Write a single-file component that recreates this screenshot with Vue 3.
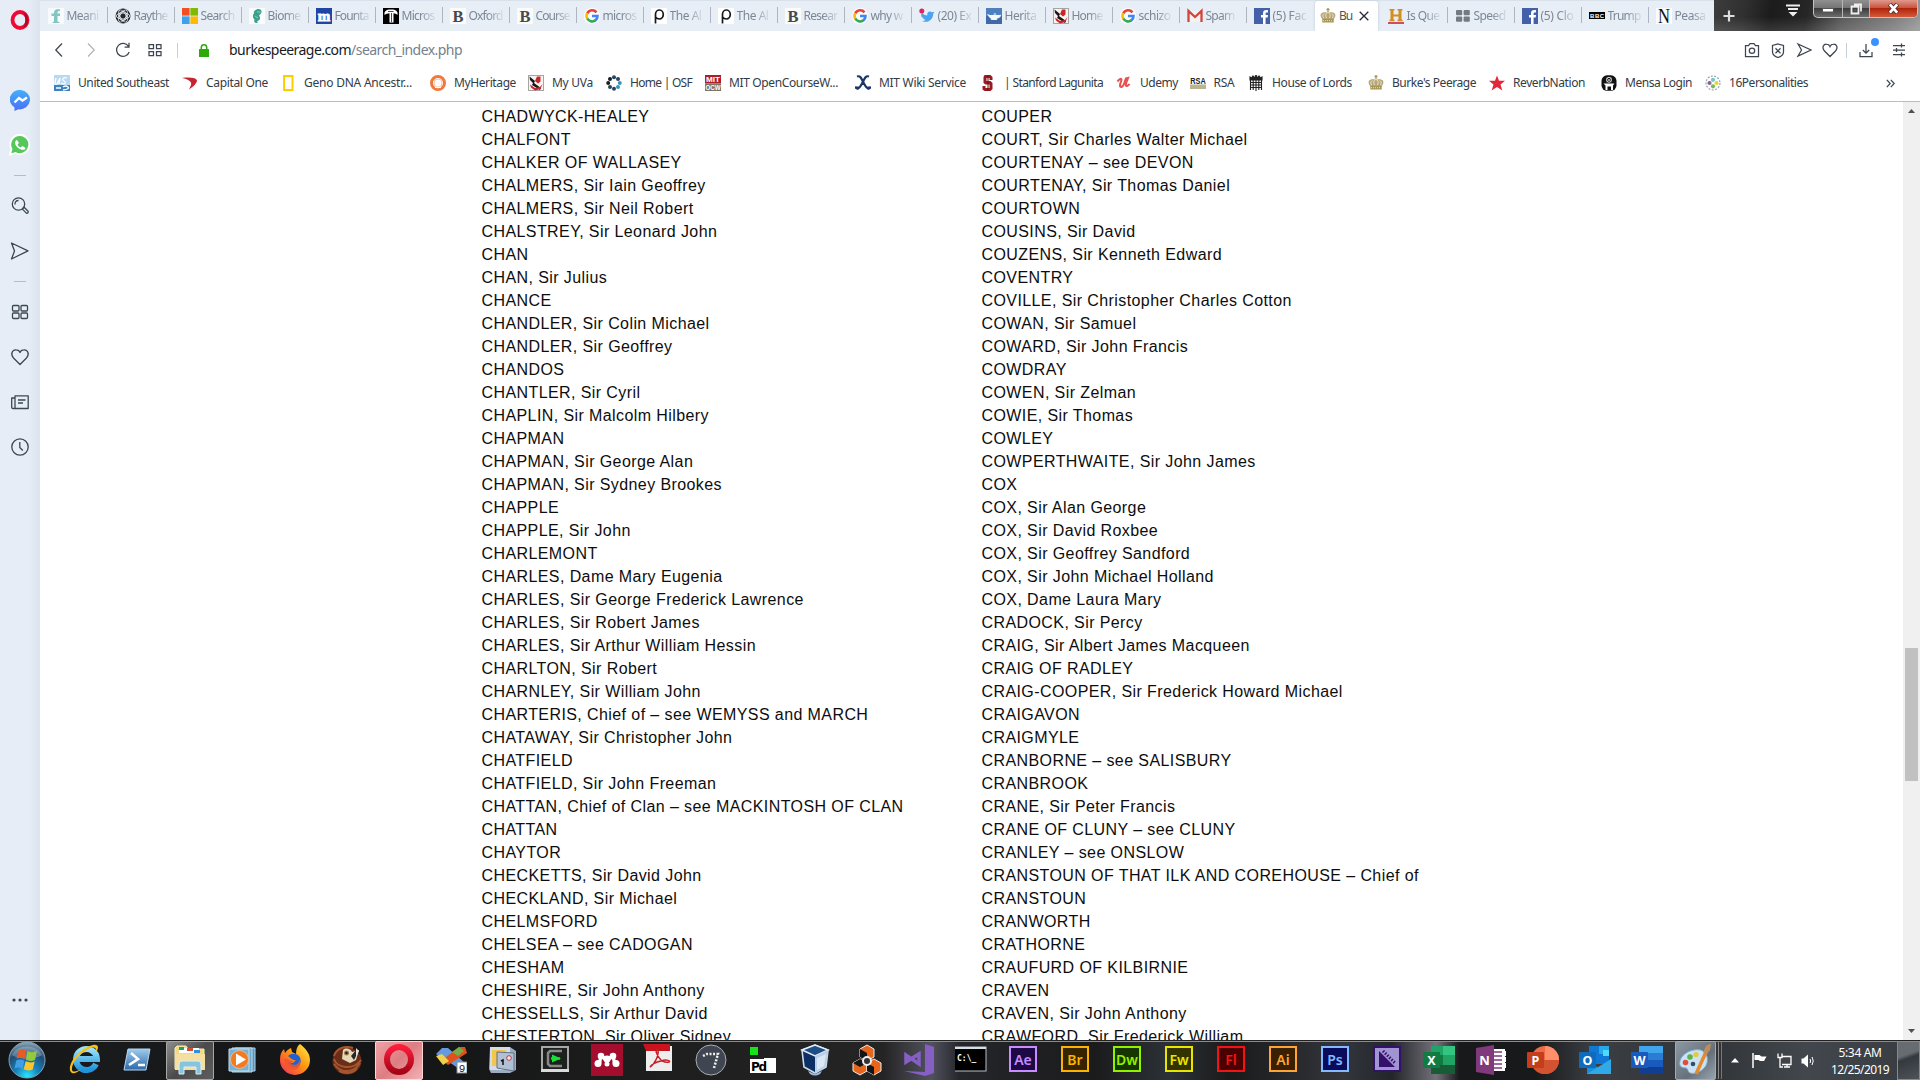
<script setup>
const art = {
  fable: '<rect width="16" height="16" fill="#f7fafa"/><path d="M12 1.500C7 .5 6 3 6 5.500H3.500v2.500H6v5.500l-1.500 1v.5h7v-.7l-2-.8V8h2.500V5.500H9.500c0-2 .3-2.700 2.500-2.300z" fill="#83c5c3"/>',
  atom: '<circle cx="8" cy="8" r="7.500" fill="#24272b"/><g fill="none" stroke="#e8eef5" stroke-width=".9"><ellipse cx="8" cy="8" rx="6.800" ry="3"/><ellipse cx="8" cy="8" rx="6.800" ry="3" transform="rotate(60 8 8)"/><ellipse cx="8" cy="8" rx="6.800" ry="3" transform="rotate(120 8 8)"/><circle cx="8" cy="8" r="4.500"/></g>',
  ms: '<path d="M0 0h7.600v7.600H0z" fill="#f25022"/><path d="M8.400 0H16v7.600H8.400z" fill="#7fba00"/><path d="M0 8.400h7.600V16H0z" fill="#3fa0ee"/><path d="M8.400 8.400H16V16H8.400z" fill="#ffb900"/>',
  horse: '<rect width="16" height="16" fill="#fafcfc"/><path d="M7.500 1.500c3-1.300 5.500.2 5 2.800-.3 1.700-1.500 2-2.500 3.200 1.500 1.500 1.500 4-.5 5-1.500.6-1.500 1.500-.7 2.500-3 .5-4.300-1.500-3.300-3.800C3.500 10 3.500 7 5 5.300 4.500 3.500 5.500 2.300 7.500 1.500z" fill="#3ba08e"/><path d="M8 4h3.500M6 8l3 2" stroke="#8fd0c2"/>',
  fount: '<rect width="16" height="16" fill="#2145a5"/><text x="8" y="12.800" text-anchor="middle" font-family="Liberation Serif,serif" font-weight="900" font-size="15" fill="#fff" stroke="#fff" stroke-width=".9">m</text>',
  tt: '<rect width="16" height="16" fill="#000"/><path d="M1.500 4.500C2.500 2 5 1.500 8 1.500s5.500.5 6.500 3V7c-1.200-1-2.500-1.800-4-1.800V14.500h-4V5.200C4.500 5.200 3 6 1.500 7z" fill="#fff"/><path d="M5 3.500h5.500M8.500 5v9" stroke="#000" stroke-width=".7"/>',
  bold: '<rect width="16" height="16" fill="#fbfbfa"/><text x="8" y="13.800" text-anchor="middle" font-family="Liberation Serif,serif" font-weight="700" font-size="16.500" fill="#454a50">B</text>',
  google: '<rect width="16" height="16" rx="7" fill="#f8fafc"/><g fill="none" stroke-width="2.600"><path d="M12.500 4.300A5.500 5.500 0 0 0 3.300 5.400" stroke="#ea4335"/><path d="M3.300 5.200a5.500 5.500 0 0 0 0 5.500" stroke="#fbbc05"/><path d="M3.300 10.500a5.500 5.500 0 0 0 8.500 1.600" stroke="#34a853"/><path d="M11.500 12.300A5.500 5.500 0 0 0 13.500 8H8" stroke="#4285f4"/></g>',
  rho: '<rect width="16" height="16" fill="#fff"/><path d="M4.500 15.500V6a3.900 4.500 0 1 1 3.900 5c-2 0-3-.8-3.900-2" fill="none" stroke="#16191d" stroke-width="1.700"/>',
  twitter: '<path d="M3.200 5c2 1.800 3.500 2.500 5 2.500C7.700 3.700 11 2.500 13 4.300l2.400-.6-1.200 2c0 6-5.700 10-11 7.300 1.500 0 2.500-.4 3.500-1.200-1.600-.2-2.400-1-2.800-2.100C2 9 2 7.500 2.300 6z" fill="#4aa4f1"/><circle cx="2.800" cy="3" r="2.500" fill="#e0245e"/>',
  lamp: '<rect width="16" height="16" fill="#4f7fbe"/><rect y="8" width="16" height="8" fill="#3f69a8"/><path d="M1 6l3 1h8c2 0 3-1 3 .8 0 1.200-2 2.200-4.500 3.200l1 1h-7l1-1C4 10.500 2 8 1 6zM7 6.500h3.500L9 5z" fill="#f4f8fb"/>',
  uva: '<rect x=".5" y=".5" width="15" height="15" fill="#f6f3f0" stroke="#a5a5a5"/><path d="M1.500 1.500L7 6l-1 2 7 5-1 2-8-5 1-2-3-3z" fill="#161616"/><path d="M9 1.500h3.500v5L10 8.500 7 6zM2 9.500l5 3.500 5-1 2.500-3-2 5-5.500 1.500-4-3z" fill="#c9252c"/>',
  gmail: '<rect x="1" y="3" width="14" height="11" fill="#f5f3f2"/><path d="M1.500 14V3L8 9l6.500-6v11" fill="none" stroke="#d3453b" stroke-width="2.300"/>',
  fb: '<rect width="16" height="16" fill="#4460a8"/><path d="M9 16V9.500H7V7h2V5.200C9 3 10.300 2 12.200 2H14v2.500h-1.200c-1 0-1.200.4-1.200 1.200V7H14l-.3 2.500h-2.100V16z" fill="#fff"/>',
  crown: '<path d="M2.500 11.500C0 8-.2 5.500 3 4.500c2-.5 3 .2 5-.2 2 .4 3-.3 5 .2 3.200 1 3 3.500.5 7z" fill="#b5a674"/><path d="M3.500 10C2 7 3 6 4.500 5.800M6.500 10C5 7 6 5 8 4.500c2 .5 3 2.500 1.500 5.500M12.500 10c1.500-3 .5-4-1-4.200" fill="none" stroke="#eeeade" stroke-width=".9"/><path d="M8 0v4M6.500 1.500h3" stroke="#a79556" stroke-width="1.300"/><rect x="2.300" y="11" width="11.400" height="3.500" fill="#a79556"/><path d="M3 12.700h10" stroke="#e8e0c0" stroke-dasharray="1 1"/>',
  hist: '<path d="M1.500 1h5v1.600H5.500v4h5v-4H9.500V1h5v1.600h-1v9h1v1.600h-5v-1.600h1V8.400h-5v3.200h1v1.600h-5v-1.600h1v-9h-1z" fill="#d38e1e"/><path d="M0 15h16" stroke="#c3192d" stroke-width="1.500"/>',
  speed: '<g fill="#737b82"><rect x="1" y="2" width="6.200" height="5.200" rx="1"/><rect x="8.600" y="2" width="6.200" height="5.200" rx="1"/><rect x="1" y="8.500" width="6.200" height="5.200" rx="1"/><rect x="8.600" y="8.500" width="6.200" height="5.200" rx="1"/></g>',
  bbc: '<rect y="4" width="16" height="7" fill="#000"/><g font-family="Liberation Sans,sans-serif" font-size="6" font-weight="700" fill="#fff"><text x="1" y="9.700">B</text><text x="6" y="9.700">B</text><text x="10.800" y="9.700">C</text></g>',
  ny: '<rect width="16" height="16" fill="#fbfbfa"/><text x="8" y="14.500" text-anchor="middle" font-family="Liberation Serif,serif" font-size="20" fill="#111" textLength="12" lengthAdjust="spacingAndGlyphs">N</text>',
  us: '<rect width="16" height="16" fill="#b8d9f2"/><rect y="10" width="16" height="6" fill="#3d83c2"/><path d="M2 3L1 8q0 2 2 1l3-6-1 6M13 3c-3-1-6 1-3 3s0 4-3 2M2 13h5M9 12q3-2 5 0t-5 3" stroke="#fff" fill="none" stroke-width="1.300"/>',
  cap: '<path d="M0 3c7-1 13-.5 14.800 2 1 2-3 6.500-7.800 9.500L9 10C10 7 7 4.500 0 3z" fill="#c8242f"/>',
  geno: '<rect x="4.100" y="1" width="8.400" height="14" fill="none" stroke="#fc0" stroke-width="2"/>',
  mh: '<circle cx="8" cy="8" r="6.500" fill="none" stroke="#f0793b" stroke-width="3"/><circle cx="8" cy="8" r="4" fill="none" stroke="#f9c5a6"/><path d="M5 12.500h6" stroke="#fff" stroke-width="1.500"/><path d="M5 14h2M9 14h2" stroke="#f0793b" stroke-width="2"/>',
  osf: '<g fill="#27465e"><circle cx="8" cy="2.200" r="2"/><circle cx="12" cy="3.900" r="2"/><circle cx="8" cy="13.800" r="2"/><circle cx="4" cy="12.100" r="2"/></g><g fill="#3b93bf"><circle cx="13.800" cy="8" r="2"/><circle cx="12" cy="12.100" r="2"/></g><g fill="#151e28"><circle cx="4" cy="3.900" r="2"/><circle cx="2.200" cy="8" r="2"/></g>',
  mit: '<rect width="16" height="8.500" fill="#ad1e2d"/><rect y="8.500" width="16" height="7.500" fill="#7d7468"/><g font-family="Liberation Sans,sans-serif" font-size="8" font-weight="900" fill="#fff"><text x="1" y="7.300" textLength="14" lengthAdjust="spacingAndGlyphs">MIT</text><text x=".5" y="15.200" textLength="15" lengthAdjust="spacingAndGlyphs">OCW</text></g>',
  wiki: '<path d="M2 1.500c3-1 4 1 6 5s3 7 6.500 7.500M14 1.500c-3-1-4 1-6 5s-3 7-6.500 7.500" fill="none" stroke="#1b3668" stroke-width="2.200"/><path d="M0 12.500l4 .5M12 13l4-.5" stroke="#1b3668" stroke-width="2.300"/>',
  stan: '<path d="M4.500 0h6l2 2v3h-3V3h-3v3h4l2 2v6l-2 2h-6l-2-1.500V11h3v2h4V9.500h-4l-2-1.500V2z" fill="#9a1a22"/><path d="M8 0v16" stroke="#6e1116" stroke-width="1"/>',
  udemy: '<path d="M1.500 6.500c3-4 4.800-3.500 3.500 0-1.300 3.500-1.500 6 .5 5.500 2.500-1 3-5 4.500-8.500l2-.5c-2 4.500-3 8.500-1 8 1-.3 1.800-1 2.500-2" fill="none" stroke="#ea5252" stroke-width="2.100"/>',
  rsa: '<rect y="9.500" width="16" height="4.500" fill="#bab590"/><text x=".3" y="9" font-family="Liberation Sans,sans-serif" font-size="9" font-weight="700" textLength="15.500" lengthAdjust="spacingAndGlyphs" fill="#222">RSA</text>',
  lords: '<path d="M2 5V2l1.500 1L5 1l1.500 2L8 0l1.500 3L11 1l1.500 2L14 2v3zM2.500 5v10M5.200 5v10M8 5v11M10.800 5v10M13.500 5v10M2 7.500h12M2 10h12M2 12.500h12" stroke="#222" stroke-width="1.100" fill="#222"/>',
  star: '<path d="M8 .5l2 5.300h6l-4.500 3.800L13.300 15.500 8 12l-5.300 3.500L4.500 9.600 0 5.800h6z" fill="#df2939"/>',
  mensa: '<rect x=".5" y=".3" width="15" height="15.500" rx="5.500" fill="#111"/><circle cx="8" cy="4.800" r="2.500" fill="none" stroke="#ddd"/><path d="M5.500 3l5 4M10.500 3l-5 4" stroke="#ddd" stroke-width=".7"/><path d="M2.500 8.500h11L12 10.500V15h-2v-3.500H6.500V15h-2v-4.500z" fill="#fff"/>',
  six: '<circle cx="8" cy="8" r="7" fill="none" stroke="#91aab1" stroke-width="1.200" stroke-dasharray="2 1.400"/><circle cx="8" cy="4.800" r="2.100" fill="#7fc3c9"/><circle cx="11.500" cy="8" r="2.100" fill="#e7d63d"/><circle cx="8" cy="11.300" r="2.100" fill="#7cb857"/><circle cx="4.500" cy="8" r="2.100" fill="#86668e"/>'
}
const tabs = [
  ['fable', 'Meani', 32], ['atom', 'Raythe', 34], ['ms', 'Search', 34], ['horse', 'Biome', 33], ['fount', 'Founta', 34], ['tt', 'Micros', 33],
  ['bold', 'Oxford', 34], ['bold', 'Course', 34], ['google', 'micros', 34], ['rho', 'The Al', 32], ['rho', 'The Al', 32], ['bold', 'Resear', 34],
  ['google', 'why w', 32], ['twitter', '(20) Ex', 34], ['lamp', 'Herita', 32], ['uva', 'Home', 31], ['google', 'schizo', 32], ['gmail', 'Spam', 29],
  ['fb', '(5) Fac', 34], ['crown', 'Bu', 13], ['hist', 'Is Que', 33], ['speed', 'Speed', 32], ['fb', '(5) Clo', 33], ['bbc', 'Trump', 33], ['ny', 'Peasa', 31]
]
const marks = [
  ['us', 'United Southeast', 54, 91], ['cap', 'Capital One', 182, 62], ['geno', 'Geno DNA Ancestr...', 280, 108], ['mh', 'MyHeritage', 430, 62],
  ['uva', 'My UVa', 528, 41], ['osf', 'Home | OSF', 606, 62], ['mit', 'MIT OpenCourseW...', 705, 109], ['wiki', 'MIT Wiki Service', 855, 87],
  ['stan', '| Stanford Lagunita', 980, 99], ['udemy', 'Udemy', 1116, 38], ['rsa', 'RSA', 1189.5, 21], ['lords', 'House of Lords', 1248, 80],
  ['crown', "Burke's Peerage", 1368, 84], ['star', 'ReverbNation', 1489, 72], ['mensa', 'Mensa Login', 1601, 67], ['six', '16Personalities', 1705, 79]
].map((m, i, all) => ({ icon: m[0], label: m[1], text: m[3], cell: (all[i + 1] ? all[i + 1][2] : 1830) - m[2] }))

// Tightens or loosens tracking so a label takes its allotted width.
const fit = (el, { value }) => {
  el.style.letterSpacing = '0px'
  el.style.letterSpacing = (value - el.getBoundingClientRect().width) / el.textContent.length + 'px'
}
const vFit = { mounted: fit }

const left = `CHADWYCK-HEALEY
CHALFONT
CHALKER OF WALLASEY
CHALMERS, Sir Iain Geoffrey
CHALMERS, Sir Neil Robert
CHALSTREY, Sir Leonard John
CHAN
CHAN, Sir Julius
CHANCE
CHANDLER, Sir Colin Michael
CHANDLER, Sir Geoffrey
CHANDOS
CHANTLER, Sir Cyril
CHAPLIN, Sir Malcolm Hilbery
CHAPMAN
CHAPMAN, Sir George Alan
CHAPMAN, Sir Sydney Brookes
CHAPPLE
CHAPPLE, Sir John
CHARLEMONT
CHARLES, Dame Mary Eugenia
CHARLES, Sir George Frederick Lawrence
CHARLES, Sir Robert James
CHARLES, Sir Arthur William Hessin
CHARLTON, Sir Robert
CHARNLEY, Sir William John
CHARTERIS, Chief of – see WEMYSS and MARCH
CHATAWAY, Sir Christopher John
CHATFIELD
CHATFIELD, Sir John Freeman
CHATTAN, Chief of Clan – see MACKINTOSH OF CLAN
CHATTAN
CHAYTOR
CHECKETTS, Sir David John
CHECKLAND, Sir Michael
CHELMSFORD
CHELSEA – see CADOGAN
CHESHAM
CHESHIRE, Sir John Anthony
CHESSELLS, Sir Arthur David
CHESTERTON, Sir Oliver Sidney`.split('\n')
const right = `COUPER
COURT, Sir Charles Walter Michael
COURTENAY – see DEVON
COURTENAY, Sir Thomas Daniel
COURTOWN
COUSINS, Sir David
COUZENS, Sir Kenneth Edward
COVENTRY
COVILLE, Sir Christopher Charles Cotton
COWAN, Sir Samuel
COWARD, Sir John Francis
COWDRAY
COWEN, Sir Zelman
COWIE, Sir Thomas
COWLEY
COWPERTHWAITE, Sir John James
COX
COX, Sir Alan George
COX, Sir David Roxbee
COX, Sir Geoffrey Sandford
COX, Sir John Michael Holland
COX, Dame Laura Mary
CRADOCK, Sir Percy
CRAIG, Sir Albert James Macqueen
CRAIG OF RADLEY
CRAIG-COOPER, Sir Frederick Howard Michael
CRAIGAVON
CRAIGMYLE
CRANBORNE – see SALISBURY
CRANBROOK
CRANE, Sir Peter Francis
CRANE OF CLUNY – see CLUNY
CRANLEY – see ONSLOW
CRANSTOUN OF THAT ILK AND COREHOUSE – Chief of
CRANSTOUN
CRANWORTH
CRATHORNE
CRAUFURD OF KILBIRNIE
CRAVEN
CRAVEN, Sir John Anthony
CRAWFORD, Sir Frederick William`.split('\n')

const F = 'font-family="Noto Sans,sans-serif"'
const adobe = (t, c, bg) =>
  `<rect x="3" y="3" width="26" height="24" fill="${bg}" stroke="${c}" stroke-width="2"/><text x="16" y="20.500" text-anchor="middle" ${F} font-weight="600" font-size="14" fill="${c}">${t}</text>`
const office = (t, c) =>
  `<rect x="0" y="8" width="17" height="16" rx="1" fill="${c}"/><text x="8.500" y="20.500" text-anchor="middle" ${F} font-weight="700" font-size="12.500" fill="#fff">${t}</text>`
const cube = (x, y, top) =>
  `<path d="M${x} ${y}l7-4 7 4v8l-7 4-7-4z" fill="#e8651c" stroke="#eee"/><path d="${top ? `M${x} ${y}l7-4 7 4-7 4z` : `M${x} ${y}l7 4v8l-7-4z`}" fill="#151515"/>`
const apps = [
  { wide: true, art: '<defs><linearGradient id="ie" x2="0" y2="1"><stop stop-color="#9be2fa"/><stop offset="1" stop-color="#1d94dc"/></linearGradient></defs><path d="M28 20A10.500 10.500 0 1 1 29 15H11" fill="none" stroke="url(#ie)" stroke-width="6"/><path d="M4 29C-3 25 8 5 25 1c6-1 6 3 3 7 1-4-2-6-7-3C11 9 3 20 4 26c1 3 6 1 9-1-4 4-7 5-9 4z" fill="#f5bf1e"/>' },
  { wide: true, art: '<defs><linearGradient id="psh" x2="0" y2="1"><stop stop-color="#9fcbed"/><stop offset="1" stop-color="#2a69ab"/></linearGradient></defs><path d="M7 5h22l-4 21H3z" fill="url(#psh)" stroke="#b5d8f3"/><path d="M10 9l7 6-9 6M17 21h7" fill="none" stroke="#fff" stroke-width="2.600"/>' },
  { on: true, art: '<path d="M1 4l2-2h9l2 3h16v20H1z" fill="#f0d984" stroke="#f9edb5"/><path d="M5 4h20v5H5z" fill="#fff"/><path d="M5 3h5v3H5z" fill="#1ba94c"/><path d="M13 4h6v3h-6z" fill="#d54d2e"/><path d="M20 6h6v3h-6z" fill="#2d93d8"/><path d="M1 10h30v16H1z" fill="#f4dfa0"/><path d="M5 30V20q0-3 3-3h16q3 0 3 3v10h-5v-7H10v7z" fill="#89c4dd" stroke="#d7f0f7"/>' },
  { wide: true, art: '<path d="M9 4h20v23H9z" fill="#5794bd" stroke="#b5d6e9"/><path d="M6 4h20v24H6z" fill="#70a8cc" stroke="#c0deee"/><path d="M3 5h20v22H3z" fill="#77b1d3" stroke="#c3e1f0"/><circle cx="13.500" cy="15.500" r="9" fill="#f47a20" stroke="#ffd1a5" stroke-width=".6"/><path d="M10 9.500l10 6-10 6z" fill="#fff"/>' },
  { art: '<defs><linearGradient id="ff" x1="1" x2="0" y2="1"><stop stop-color="#fff04e"/><stop offset=".45" stop-color="#ff980e"/><stop offset="1" stop-color="#f1265c"/></linearGradient></defs><path d="M21 0c5 4 10 9 10 16a15 15 0 0 1-30 0C1 11 2 8 5 5l1 4c2-3 4-4 6-5l1 4 4 2c0-4 1-8 4-10z" fill="url(#ff)"/><path d="M9 12c3-3 8-3 11 0 3 4 2 9-2 11-4 1-8-1-9-5l5 1 3-3c-3 1-5-2-8-4z" fill="#2460cd"/><path d="M5 15c4-1 5 2 9 2l-2 3c4 2 9 0 8-5 3 6-1 12-7 11-5-1-8-6-8-11z" fill="#f0562a" opacity=".85"/>' },
  { art: '<ellipse cx="16" cy="17" rx="14.500" ry="13.500" fill="#6a2d18"/><path d="M3 15c3 9 19 12 27 1M3 20c7 10 20 9 26-1M8 27c6 3 14 3 18-3M3 12C5 5 13 1 22 4" stroke="#a5562f" stroke-width="2" fill="none"/><path d="M12 6c3-3 8-1 9 2l7-2-3 10-6 3-8-4z" fill="#e8d8b8"/><circle cx="15.500" cy="9" r="2.500" fill="#9b7b4f"/><circle cx="15.500" cy="9" r="1.200" fill="#231a14"/><path d="M20 12l5-6 2 2-4 8z" fill="#23272b"/><path d="M25 4l3 3-3 6" fill="#e3e3e3"/>' },
  { on: true, red: true, art: '<defs><linearGradient id="op" x2="0" y2="1"><stop stop-color="#fb1d3a"/><stop offset="1" stop-color="#a70317"/></linearGradient></defs><ellipse cx="16" cy="15.500" rx="12" ry="12.500" fill="none" stroke="url(#op)" stroke-width="6"/>' },
  { art: '<path d="M1 10l6-6h6l17 15-6 6-7-5z" fill="#649be0"/><path d="M24 3h6l2 6-19 12-6-5z" fill="#e0521d"/><path d="M1 12l7 9 6-4-7-7z" fill="#f2d14a"/><path d="M17 8l7-5 5 4-6 5z" fill="#73ad47"/><rect x="22" y="18" width="10" height="11" fill="#fff" stroke="#888"/><text x="27" y="27.500" text-anchor="middle" font-family="Liberation Mono,monospace" font-size="11" fill="#222">9</text>' },
  { art: '<path d="M3 3h20l6 4v19l-6 3H4L2 25z" fill="#9eacc1"/><path d="M3 3h20v23H3z" fill="#d4dcea"/><path d="M5 6h14v16H5z" fill="#f3c64e"/><path d="M10 8l17 1v18l-17-3z" fill="#b2c0d4" stroke="#607089"/><circle cx="22" cy="14" r="2.300" fill="#eee" stroke="#bf3747"/><path d="M14 17l2-1v5" stroke="#111" stroke-width="1.500" fill="none"/>' },
  { art: '<path d="M3 3h26v24H3z" fill="#1d201e" stroke="#a7a9a9" stroke-width="2"/><path d="M2 25h28v3H2z" fill="#d8dbd9"/><path d="M23 7H11L9 9v11l2 2h12M12 14.500h9" fill="none" stroke="#888" stroke-width="2.500"/><path d="M13 10.500l9 4-9 4z" fill="#16df37"/>' },
  { art: '<rect width="32" height="32" fill="#a40d2e"/><g fill="#fff"><circle cx="10" cy="12" r="3.300"/><circle cx="22" cy="12" r="3.300"/><circle cx="16" cy="15" r="3.600"/><circle cx="7" cy="19.500" r="3.500"/><circle cx="25" cy="19.500" r="3.500"/><circle cx="16" cy="20" r="2.500"/><path d="M8 12l-1 8h3l1-5 5 3 5-3 1 5h3l-1-8z"/></g>' },
  { art: '<path d="M3 2h26v25H3z" fill="#f3f2f1"/><path d="M0 0h27v7H3z" fill="#c9141d"/><path d="M3 7h26v20H3z" fill="#eee"/><path d="M7 23c5-3 9-12 8-17-1-2-3 0-1 4 3 7 8 9 12 8 2-1-2-3-8-1-5 1-9 3-11 6z" fill="none" stroke="#cb1d25" stroke-width="1.500"/>' },
  { art: '<circle cx="16" cy="16" r="15" fill="#3f4652" stroke="#a9adb3"/><path d="M8 12l4-2h11l-4 14" fill="none" stroke="#eee" stroke-width="2.500" stroke-dasharray="2 1.500"/>' },
  { art: '<path d="M3 3h8v8H3z" fill="#14e517"/><path d="M3 15h14v-1h12v15H3z" fill="#fff"/><text x="4" y="26.500" font-family="DejaVu Sans,sans-serif" font-weight="700" font-size="12" textLength="16">Pd</text>' },
  { art: '<path d="M3 6l13-5 13 5-2 17-11 6-11-6z" fill="#0e2f63" stroke="#cbdcec" stroke-width="1.600"/><path d="M3 6l13-5 13 5-13 6z" fill="#1f4d86" stroke="#e2edf6" stroke-width="1.500"/><path d="M16 12l13-6-2 17-11 6z" fill="#b9d0e8"/><path d="M18 14l9-4-2 12-7 4z" fill="#dbe8f3"/><path d="M9 27l7 3 7-3-2 3q-5 3-10 0z" fill="#9fbbe0"/>' },
  { art: cube(9, 5, false) + cube(2, 19, true) + cube(16, 19, false) + '<circle cx="16" cy="17" r="4" fill="#333" stroke="#eee" stroke-width="2"/>' },
  { art: '<path d="M22 0l9 3v26l-9 3-21-5 21 1z" fill="#865fc5"/><path d="M3 11v7l13-8v10z" fill="none" stroke="#865fc5" stroke-width="3.500"/>' },
  { art: '<rect x="-1" y="3" width="32" height="24" fill="#000" stroke="#b9bec3"/><path d="M-1 4h32" stroke="#d4dfe8" stroke-width="2"/><text x="2" y="16.500" font-family="DejaVu Sans Mono,monospace" font-size="8" font-weight="700" fill="#fff">C:\\_</text>' },
  { art: adobe('Ae', '#c78cff', '#1d0a45') }, { art: adobe('Br', '#f7b500', '#372300') }, { art: adobe('Dw', '#91f200', '#173500') },
  { art: adobe('Fw', '#e8e500', '#333300') }, { art: adobe('Fl', '#f11414', '#4b0000') }, { art: adobe('Ai', '#ffa336', '#382000') }, { art: adobe('Ps', '#81baff', '#0b0b5b') },
  { art: '<rect x="3" y="3" width="26" height="24" fill="#a194d2" stroke="#35106b" stroke-width="2"/><path d="M8 7v16h16z" fill="#35106b"/><path d="M12 7l12 12" stroke="#35106b" stroke-width="3" stroke-dasharray="1.500 1.500"/>' },
  { art: '<path d="M8 2h24v28H8z" fill="#21a366"/><path d="M20 2h12v9H20z" fill="#33c481"/><path d="M8 11h12v10H8z" fill="#107c41"/><path d="M8 21h24v9H8z" fill="#185c37"/>' + office('X', '#107c41') },
  { art: '<path d="M18 5h12v22H18z" fill="#fff"/><path d="M19 8h8M19 12h8M19 16h8M19 20h8M19 24h8" stroke="#80397b" stroke-width="1.500"/><path d="M28 7h3v5h-3zM28 13h3v5h-3zM28 19h3v5h-3z" fill="#fff"/><path d="M1 4l18-3v30L1 28z" fill="#80397b"/><text x="9.500" y="20.500" text-anchor="middle" ' + F + ' font-weight="700" font-size="13" fill="#fff">N</text>' },
  { art: '<circle cx="18" cy="16" r="14" fill="#ed6c47"/><path d="M18 2a14 14 0 0 1 14 14H18z" fill="#ff8f6b"/><path d="M4 16h28a14 14 0 0 1-28 0z" fill="#d35230"/>' + office('P', '#c43e1c') },
  { art: '<path d="M10 2h20v18H10z" fill="#0f78d4"/><path d="M20 2h10v8H20z" fill="#28a8ea"/><path d="M24 6h6v6h-6z" fill="#50d9ff"/><path d="M8 30V17l12 7 12-9v15z" fill="#1490df"/><path d="M8 30l24-15v15z" fill="#32a9e7"/>' + office('O', '#0f6cbd') },
  { art: '<path d="M8 2h24v7H8z" fill="#41a5ee"/><path d="M8 9h24v7H8z" fill="#2b7cd3"/><path d="M8 16h24v7H8z" fill="#185abd"/><path d="M8 23h24v7H8z" fill="#103f91"/>' + office('W', '#185abd') },
  { on: true, last: true, art: '<path d="M15 6c9-2 15 4 13 13-2 7-11 12-17 10-3-1-1-4-4-5-6 0-7-3-6-7C2 12 8 7 15 6z" fill="#c9e2f4" stroke="#7eabcb"/><circle cx="6.500" cy="18.500" r="2.800" fill="#e04c3f"/><circle cx="11" cy="13" r="2.800" fill="#59b34a"/><circle cx="17" cy="10.500" r="2.600" fill="#eac73d"/><circle cx="14" cy="20" r="2.300" fill="#314f67"/><path d="M27 8L17 30" stroke="#e58a2d" stroke-width="3.500"/><path d="M24 8l3-6 5-3-1 7-4 5z" fill="#be8d5a"/>' }
]
</script>

<template>
  <div class="screen">
    <div class="browser">
      <aside class="side">
        <svg class="opera" width="20" height="20" viewBox="0 0 20 20"><ellipse cx="10" cy="10" rx="7.500" ry="8" fill="none" stroke="#ef0a34" stroke-width="3.800" /><path d="M13 2c7 2 7 14 0 16 3-4 3-12 0-16z" fill="#a80c28" /></svg>
        <svg class="msgr" width="22" height="22" viewBox="0 0 22 22"><defs><linearGradient id="mg" x2="0" y2="1"><stop stop-color="#42b0fb" /><stop offset="1" stop-color="#4d6cf4" /></linearGradient></defs><path d="M11 1a10 9.500 0 1 1-2.500 19.300L4.500 22v-3.500A10 9.500 0 0 1 11 1z" fill="url(#mg)" /><path d="M4.500 13.500l4.500-4.500 3.500 2.500 4.500-3" fill="none" stroke="#fff" stroke-width="2.300" /></svg>
        <svg class="wa" width="22" height="22" viewBox="0 0 22 22"><path d="M11 1a9.500 9.500 0 1 1-4.500 18L1 20.500 2.500 15A9.500 9.500 0 0 1 11 1z" fill="#55c75b" stroke="#fff" stroke-width="1.800" /><path d="M8 6l2 3-1.500 1.500c.7 1.500 1.700 2.500 3 3L13.500 12l3 2c-.5 4-9.500 1-10.500-5 0-1.500 1-3 2-3z" fill="#fff" /></svg>
        <i class="bar"></i>
        <svg class="ic find" width="20" height="20" viewBox="0 0 20 20"><circle cx="8.500" cy="8" r="6.200" /><path d="M12.800 12.500l1.300-1.300 4 4q.6 1.700-1.500 2.200l-4-4zM8.500 4.500C6 4.500 4.800 6 5 8.500" /></svg>
        <svg class="ic plane" width="20" height="20" viewBox="0 0 20 20"><path d="M1.500 2l16.500 7.800L1.500 18l3-8z" /></svg>
        <i class="bar second"></i>
        <svg class="ic grid" width="20" height="20" viewBox="0 0 20 20"><rect x="2.500" y="3.500" width="6.500" height="5.500" rx="1" /><rect x="11" y="3.500" width="6.500" height="5.500" rx="1" /><rect x="2.500" y="11" width="6.500" height="5.500" rx="1" /><rect x="11" y="11" width="6.500" height="5.500" rx="1" /></svg>
        <svg class="ic lower" width="20" height="20" viewBox="0 0 20 20"><path d="M10 17.500L3.500 11C0 7 2.500 2.500 6 2.800c2 0 3.500 1.200 4 2.700.5-1.500 2-2.700 4-2.700 3.500-.3 6 4.200 2.500 8.200z" /></svg>
        <svg class="ic lower" width="20" height="20" viewBox="0 0 20 20"><path d="M5 16.500V3.800h13.200v12.700H3Q1.700 16.500 1.700 15V6H5M8 8h7.500M8 11h5" /></svg>
        <svg class="ic lower" width="20" height="20" viewBox="0 0 20 20"><circle cx="10" cy="10" r="8.200" /><path d="M9.800 5v5.500l3 3" /></svg>
        <svg class="dots" width="16" height="4" viewBox="0 0 16 4"><circle cx="2" cy="2" r="1.600" /><circle cx="8" cy="2" r="1.600" /><circle cx="14" cy="2" r="1.600" /></svg>
      </aside>
      <div class="main">
        <div class="strip">
          <div class="tabs">
            <div v-for="(t, i) in tabs" :key="i" class="tab" :class="{ active: i === 19, plain: i === 18 || i === 19 || i === 24 }">
              <svg width="16" height="16" viewBox="0 0 16 16" v-html="art[t[0]]"></svg>
              <span v-fit="t[2]" class="name">{{ t[1] }}</span>
              <svg v-if="i === 19" class="x" width="10" height="10" viewBox="0 0 10 10"><path d="M.7.7l8.600 8.600M9.300.7L.7 9.300" stroke="#222a33" stroke-width="1.300" /></svg>
            </div>
          </div>
          <div class="glass">
            <svg class="plus" width="12" height="12" viewBox="0 0 12 12"><path d="M6 .5v11M.5 6h11" stroke="#ddd" stroke-width="2.200" /></svg>
            <svg class="stack" width="14" height="13" viewBox="0 0 14 13"><path d="M0 1.500h14M2 5h10" stroke="#eee" stroke-width="2" /><path d="M2.500 8h9L7 12.500z" fill="#eee" /></svg>
            <div class="win">
              <span class="wb"><svg width="12" height="5" viewBox="0 0 12 5"><rect x=".5" y=".5" width="11" height="3.500" fill="#fff" stroke="#555" /></svg></span>
              <span class="wb mid"><svg width="12" height="12" viewBox="0 0 12 12"><path d="M4 1.500h7v7M1.500 3.500h7v7h-7z" fill="none" stroke="#eee" stroke-width="1.800" /><path d="M4 6h2v2H4z" fill="#555" /></svg></span>
              <span class="wb close"><svg width="13" height="11" viewBox="0 0 13 11"><path d="M2.500 1l8 9M10.500 1l-8 9" stroke="#5e3030" stroke-width="4.500" /><path d="M2.800 1.300l7.400 8.400M10.200 1.300L2.800 9.700" stroke="#fff" stroke-width="2.700" /></svg></span>
            </div>
          </div>
        </div>
        <div class="address">
          <svg class="ln back" width="10" height="16" viewBox="0 0 10 16"><path d="M8 1.500L1.800 8 8 14.500" /></svg>
          <svg class="ln fwd" width="10" height="16" viewBox="0 0 10 16"><path d="M2 1.500L8.200 8 2 14.500" /></svg>
          <svg class="ln" width="16" height="16" viewBox="0 0 16 16"><path d="M13.500 4.300A6.500 6.500 0 1 0 14.200 10M14 .8v4.400H9.600" /></svg>
          <svg class="ln speed" width="16" height="16" viewBox="0 0 16 16"><path d="M2 2.500h4.500v4H2zM9.500 2.500H14v4H9.500zM2 9.500h4.500v4H2zM9.500 9.500H14v4H9.500z" /></svg>
          <i class="vsep"></i>
          <svg class="lock" width="10" height="13" viewBox="0 0 10 13"><path d="M2.300 6V3.500a2.700 2.700 0 0 1 5.400 0V6" fill="none" stroke="#2daa0a" stroke-width="1.500" /><rect y="5" width="10" height="8" rx=".5" fill="#2daa0a" /></svg>
          <span v-fit="233" class="url">burkespeerage.com<em>/search_index.php</em></span>
          <div class="tools">
            <svg class="ln" width="16" height="16" viewBox="0 0 16 16"><path d="M1.500 3.500h3l1.500-2h4l1.500 2h3v11h-13z" /><circle cx="8" cy="8.700" r="2.700" /></svg>
            <svg class="ln" width="16" height="16" viewBox="0 0 16 16"><path d="M8 2l5.500 1.500v6.500c0 3-2.500 4.500-5.500 5.500-3-1-5.500-2.500-5.500-5.500V3.500zM5.500 6.300l5 5M10.500 6.300l-5 5" /></svg>
            <svg class="ln" width="16" height="16" viewBox="0 0 16 16"><path d="M2 2l13 6L2 14l3.500-6z" /></svg>
            <svg class="ln" width="16" height="16" viewBox="0 0 16 16"><path d="M8 14.500L2.500 9C-.5 5.500 1.500 2 4.500 2.200 6.300 2.200 7.500 3.200 8 4.500c.5-1.300 1.700-2.300 3.500-2.300 3-.2 5 3.300 2 6.800z" /></svg>
            <i class="vsep thin"></i>
            <span class="dl"><svg class="ln" width="16" height="16" viewBox="0 0 16 16"><path d="M2 10v4.500h12V10M8 2v9M4.800 8L8 11.200 11.200 8" /></svg><b></b></span>
            <svg class="ln" width="14" height="16" viewBox="0 0 14 16"><path d="M1 3.500h12M1 8h12M1 12.500h12M9.500 1.500v4M4.500 6v4M9.500 10.500v4" /></svg>
          </div>
        </div>
        <div class="marks">
          <div v-for="m in marks" :key="m.label" class="mark" :style="{ width: m.cell + 'px' }">
            <svg width="16" height="16" viewBox="0 0 16 16" v-html="art[m.icon]"></svg>
            <span v-fit="m.text">{{ m.label }}</span>
          </div>
          <svg class="ln more" width="9" height="9" viewBox="0 0 9 9"><path d="M.8.8l3.400 3.700L.8 8.200M4.800.8l3.400 3.700-3.400 3.700" /></svg>
        </div>
        <div class="page">
          <div class="cols">
            <div class="col"><div v-for="r in left" :key="r" class="row">{{ r }}</div></div>
            <div class="col"><div v-for="r in right" :key="r" class="row">{{ r }}</div></div>
          </div>
          <div class="scroll">
            <svg width="7" height="4" viewBox="0 0 7 4"><path d="M0 4l3.500-4L7 4z" fill="#505050" /></svg>
            <i class="thumb"></i>
            <svg width="7" height="4" viewBox="0 0 7 4"><path d="M0 0l3.500 4L7 0z" fill="#505050" /></svg>
          </div>
        </div>
      </div>
    </div>
    <div class="task">
      <svg class="start" width="38" height="38" viewBox="0 0 38 38"><defs><radialGradient id="orb" cy=".95" r=".95"><stop stop-color="#2be8ff" /><stop offset=".35" stop-color="#1782bd" /><stop offset=".7" stop-color="#214c70" /><stop offset="1" stop-color="#8fa9ba" /></radialGradient></defs><circle cx="19" cy="19" r="18" fill="url(#orb)" stroke="#82a3b8" /><path d="M4 14a16 13 0 0 1 30 0c-8 5-22 5-30 0z" fill="#fff" opacity=".25" /><path d="M11 9c3-1.500 5-1 7 .2L16.500 18c-3-1.500-5-1.500-8-.2z" fill="#ec5a24" /><path d="M19.500 10c3 1.500 6 1.500 9.500 0l-2 9c-3 1.300-6 1.300-9-.2z" fill="#95c93c" /><path d="M8.300 19.500c3-1.300 5-1.300 8 .2l-1.800 8c-3-1.500-5-1.500-8-.2z" fill="#3fa0e6" /><path d="M17.700 20.300c3 1.500 6 1.500 9 .2l-2 8c-3 1.300-6 1.300-9-.2z" fill="#fdc52b" /></svg>
      <div class="apps">
        <div v-for="(a, i) in apps" :key="i" class="app" :class="{ on: a.on, red: a.red, last: a.last, wide: a.wide }">
          <svg width="32" height="32" viewBox="0 0 32 32" v-html="a.art"></svg>
        </div>
      </div>
      <div class="tray">
        <svg width="8" height="5" viewBox="0 0 8 5"><path d="M0 4.500L4 0l4 4.500z" fill="#fff" /></svg>
        <svg class="flag" width="15" height="15" viewBox="0 0 15 15"><path d="M1 0v15" stroke="#fff" stroke-width="1.500" /><path d="M2.500 2h5l2 1.500h5L12 8H8L6.500 7h-4z" fill="#fff" /></svg>
        <svg class="net" width="15" height="15" viewBox="0 0 15 15"><path d="M5 3.500h9v8H5M7 14h6M10 12v2M1 .5v4h4v-4M3 4.500V14h3" fill="none" stroke="#fff" stroke-width="1.300" /></svg>
        <svg class="vol" width="15" height="14" viewBox="0 0 15 14"><path d="M.5 4.500h2L7 .5v13l-4.500-4h-2z" fill="#fff" /><path d="M9 5q1.300 2 0 4M11 3q2.500 4 0 8" fill="none" stroke="#fff" /></svg>
        <div class="clock"><span v-fit="43">5:34 AM</span><span v-fit="58">12/25/2019</span></div>
        <i class="desk"></i>
      </div>
    </div>
  </div>
</template>

<style>
html, body { margin: 0; overflow: hidden; }
</style>
<style scoped>
.screen { width: 1920px; height: 1080px; display: flex; flex-direction: column; overflow: hidden; background: #fff; font-family: "Noto Sans", "Open Sans", sans-serif; }
.screen svg { display: block; flex: none; }
.browser { height: 1040px; display: flex; }
.side { width: 40px; flex: none; display: flex; flex-direction: column; align-items: center; background: linear-gradient(90deg, #e6edf6 70%, #dbe3ec); }
.opera { margin-top: 10px; }
.msgr { margin: 59px 0 0 1px; }
.wa { margin-top: 23px; }
.bar { width: 12px; height: 1px; margin-top: 19px; background: #b3bdca; flex: none; }
.bar.second { margin-top: 20px; }
.ic { fill: none; stroke: #3c4753; stroke-width: 1.3; stroke-linejoin: round; margin-right: 1px; }
.find { margin-top: 20px; }
.plane { margin-top: 25px; }
.grid { margin-top: 19.5px; }
.lower { margin-top: 25px; }
.dots { margin-top: 541.5px; fill: #3c4753; }
.main { width: 1880px; display: flex; flex-direction: column; }
.strip { height: 31px; display: flex; flex: none; }
.tabs { width: 1674px; flex: none; display: flex; background: #e7eef6; border-top: 1px solid #d9e1ea; box-sizing: border-box; padding-left: 1px; }
.tab { width: 67px; flex: none; display: flex; align-items: center; padding-left: 6.5px; position: relative; height: 30px; box-sizing: border-box; }
.tab:last-child { width: 65px; }
.tab:not(.plain)::after { content: ""; position: absolute; right: 0; top: 6px; width: 1px; height: 16px; background: #adb6c0; }
.tab .name { margin-left: 3px; flex: none; white-space: nowrap; font-size: 12px; line-height: 18px; color: #7b8794; mask-image: linear-gradient(90deg, #000 55%, rgba(0, 0, 0, .15)); }
.tab.active { width: 63px; margin: 0 3px 0 1px; padding-left: 5px; background: #fff; border-radius: 3px 3px 0 0; box-shadow: 0 0 3px #bfc9d4; clip-path: inset(-2px -4px 0); }
.tab.active .name { color: #4b5560; mask-image: none; margin-right: 7px; }
.glass { flex: 1; display: flex; background: linear-gradient(rgba(255, 255, 255, 0) 55%, rgba(255, 255, 255, .12)), linear-gradient(100deg, #3c3c3c, #303030 15%, #1c1c1c 28%, #262626 45%, #5a5a5a 62%, #808080 88%, #999); }
.plus { margin: 10px 0 0 9px; }
.stack { margin: 4px 0 0 51px; }
.win { margin-left: 13px; width: 103px; height: 17px; display: flex; border: 1px solid #c3c3c3; border-top: 0; border-radius: 0 0 5px 5px; overflow: hidden; background: linear-gradient(#909090, #757575 45%, #3d3d3d 50%, #6c6c6c); }
.wb { width: 29px; display: flex; align-items: center; justify-content: center; border-right: 1px solid #b6b6b6; box-sizing: border-box; padding-top: 3px; }
.wb.mid { width: 27px; padding-top: 0; }
.wb.close { width: 47px; border: 0; padding-top: 0; background: linear-gradient(#df9a8c, #ca5541 45%, #b02509 50%, #d6583a); }
.address { height: 37px; display: flex; align-items: center; flex: none; padding: 1px 0 0 14px; box-sizing: border-box; }
.ln { fill: none; stroke: #3c4550; stroke-width: 1.25; }
.fwd { margin: 0 19px 0 22px; opacity: .4; }
.speed { margin-left: 16px; }
.vsep { width: 1px; height: 15px; background: #c5cdd5; margin: 0 21px 0 14px; }
.url { margin: 0 0 1px 20px; flex: none; white-space: nowrap; font-size: 14px; color: #141a21; }
.url em { font-style: normal; color: #75818e; }
.tools { margin-left: auto; display: flex; align-items: center; gap: 10px; padding-right: 14px; }
.vsep.thin { margin: 0 1px 0 -2px; }
.dl { position: relative; margin-right: 8px; }
.dl b { position: absolute; left: 13px; top: -4px; width: 8px; height: 8px; border-radius: 50%; background: #3b92ff; }
.marks { height: 34px; border-bottom: 1px solid #b3c0cc; display: flex; align-items: center; padding: 0 0 3px 14px; flex: none; box-sizing: border-box; }
.mark { display: flex; align-items: center; gap: 8px; flex: none; font-size: 12px; line-height: 16px; color: #333c46; white-space: nowrap; }
.more { margin-left: 56px; }
.page { flex: 1; min-height: 0; display: flex; justify-content: space-between; overflow: hidden; }
.cols { display: flex; padding: 3px 0 0 441.5px; font-family: "Liberation Sans", Arial, sans-serif; font-size: 16px; letter-spacing: .41px; color: #0d0d0d; }
.col { width: 500px; }
.row { height: 23px; line-height: 23px; white-space: nowrap; }
.scroll { width: 17px; background: #f0f0f0; display: flex; flex-direction: column; align-items: center; padding: 7px 0; box-sizing: border-box; }
.thumb { width: 13px; height: 133px; margin: 535px 0 auto; background: #c1c1c1; }
.task { height: 40px; display: flex; box-sizing: border-box; border-top: 1px solid #222; box-shadow: inset 0 1px #8b8b8b; background: linear-gradient(90deg, #141516 0, #191a1c 5%, #131415 20%, #202020 38%, #242425 46%, #52525e 48.500%, #25262b 50%, #1b1b1c 57%, #2c3238 61%, #1a1a1a 64%, #32353b 70%, #22252a 72.500%, #74717a 74.800%, #18191a 76%, #18191a 80%, #3b3f44 83%, #303438 89%, #42474d 94%, #383c41); }
.start { margin: 0 0 0 8px; }
.apps { display: flex; margin-left: 11.5px; }
.app { width: 52px; height: 39px; display: flex; align-items: center; justify-content: center; padding-bottom: 1px; box-sizing: border-box; flex: none; }
.app.wide { width: 53px; }
.app.on { width: 48px; margin: 0 2px; border: 1px solid #a8a8a8; border-radius: 2px; background: linear-gradient(135deg, #8d8d8d, #4a4a4a 50%, #5e5e5e); }
.app.red { border-color: #ffd5d8; background: linear-gradient(135deg, #efa2a6, #dd7d82 50%, #f3b1b5); }
.app.last { width: 41px; margin-left: 2px; background: linear-gradient(135deg, #8b98a3, #66717b 60%, #99a5ae); box-shadow: 3px 0 0 -1px #343434, 4px 0 0 -1px #8d8d8d, 6px 0 0 -1px #343434, 7px 0 0 -1px #777; }
.tray { flex: 1; display: flex; align-items: center; justify-content: flex-end; color: #fff; }
.flag { margin-left: 13px; }
.net { margin-left: 10px; }
.vol { margin-left: 9px; }
.clock { width: 60px; margin: 0 7px 0 14px; display: flex; flex-direction: column; align-items: center; font-size: 12px; line-height: 17px; white-space: nowrap; }
.desk { width: 23px; height: 39px; box-sizing: border-box; border: 1px solid #858a8f; background: linear-gradient(160deg, #666c71 35%, #34393e 45%, #4d5359); }
</style>
